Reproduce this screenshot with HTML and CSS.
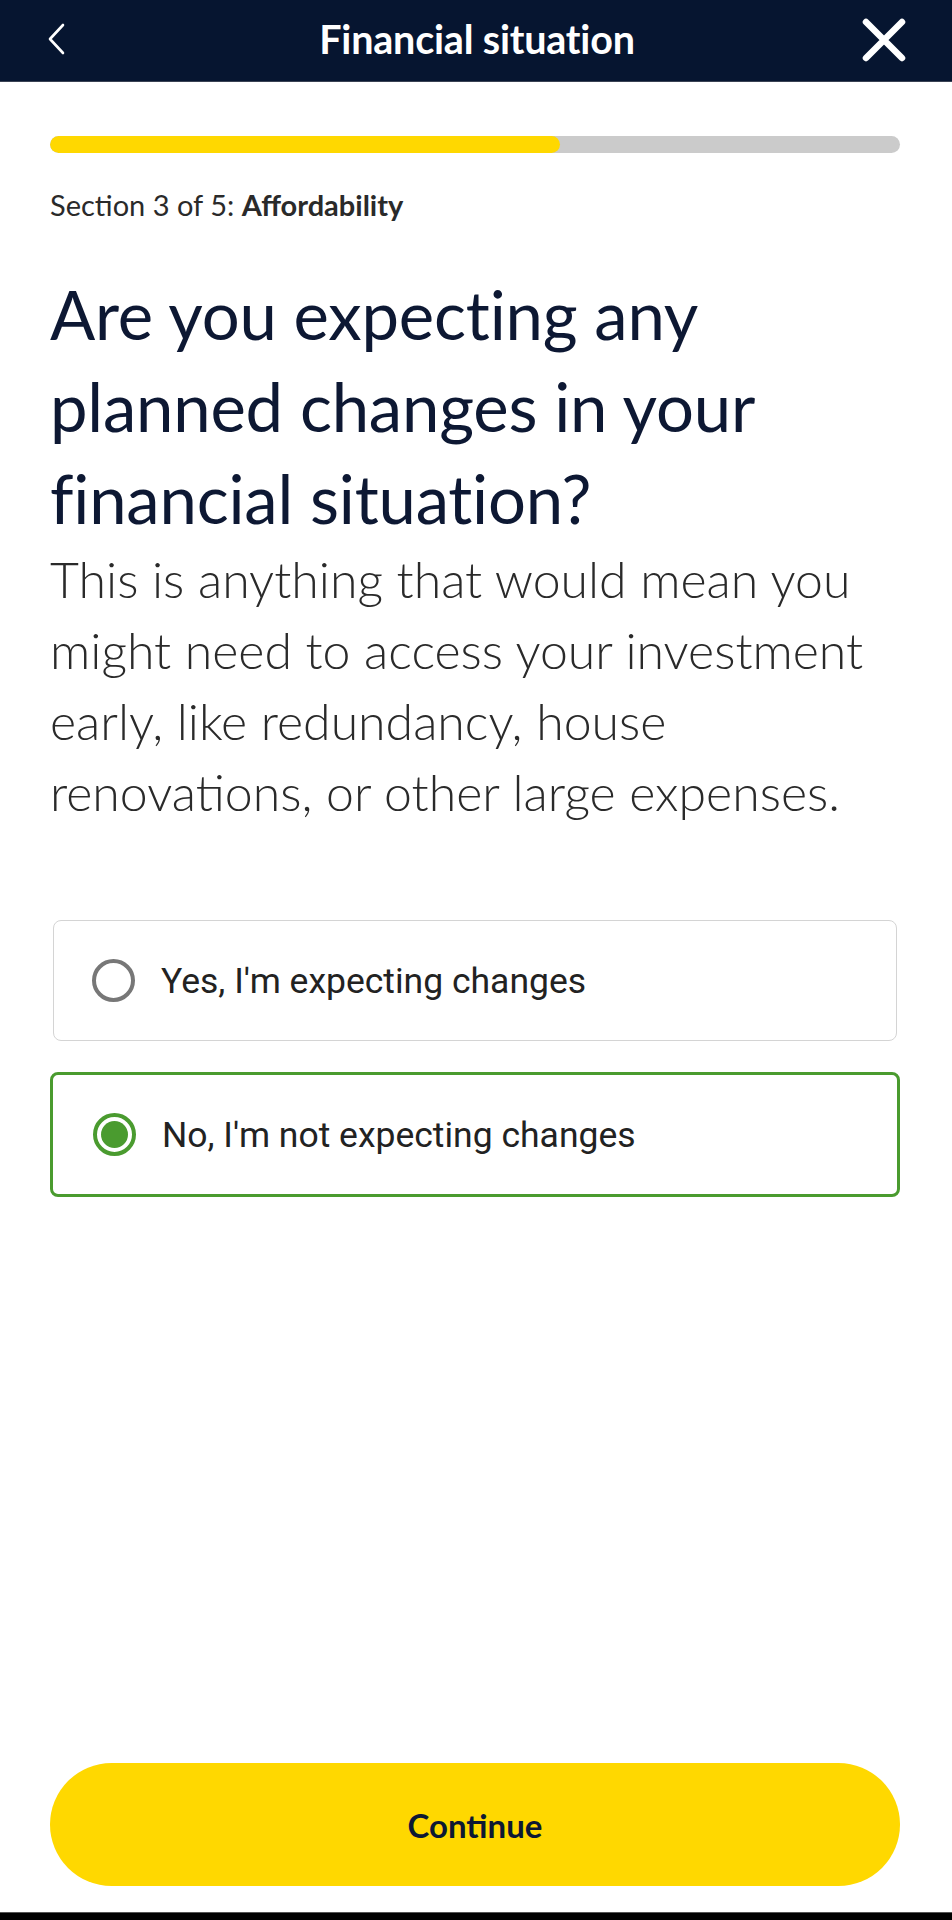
FILE: index.html
```html
<!DOCTYPE html>
<html lang="en">
<head>
<meta charset="utf-8">
<title>Financial situation</title>
<link rel="stylesheet" href="styles.css">
</head>
<body>
<div class="screen">
  <header class="topbar">
    <button class="icon-btn back" aria-label="Back">
      <svg width="20" height="32" viewBox="0 0 20 32"><path d="M15 2 L2 16 L15 30" fill="none" stroke="#fff" stroke-width="2.6" stroke-linecap="round" stroke-linejoin="round"/></svg>
    </button>
    <h1 class="title">Financial situation</h1>
    <button class="icon-btn close" aria-label="Close">
      <svg width="44" height="44" viewBox="0 0 44 44"><path d="M4 4 L40 40 M40 4 L4 40" fill="none" stroke="#fff" stroke-width="6.5" stroke-linecap="round"/></svg>
    </button>
  </header>
  <main class="content">
    <div class="progress"><div class="progress-fill" style="width:60%"></div></div>
    <p class="section">Section 3 of 5: <strong>Affordability</strong></p>
    <h2 class="question">Are you expecting any planned changes in your financial situation?</h2>
    <p class="hint">This is anything that would mean you might need to access your investment early, like redundancy, house renovations, or other large expenses.</p>
    <div class="options">
      <label class="option">
        <span class="radio"></span>
        <span class="option-text">Yes, I'm expecting changes</span>
      </label>
      <label class="option selected">
        <span class="radio"></span>
        <span class="option-text">No, I'm not expecting changes</span>
      </label>
    </div>
  </main>
  <footer class="footer">
    <button class="continue">Continue</button>
  </footer>
  <div class="navbar"></div>
</div>
</body>
</html>
```

FILE: styles.css
```css
html, body {
  margin: 0;
  padding: 0;
  background: #fff;
}
.screen {
  width: 952px;
  height: 1920px;
  display: flex;
  flex-direction: column;
  font-family: "Lato", "Open Sans", sans-serif;
}
.topbar {
  height: 82px;
  background: #061530;
  display: grid;
  grid-template-columns: 1fr auto 1fr;
  align-items: center;
  padding: 0 46px 0 48px;
  box-sizing: border-box;
  border-bottom: 1px solid #3a4254;
}
.icon-btn {
  background: none;
  border: 0;
  padding: 0;
  display: flex;
  align-items: center;
  justify-content: center;
}
.back { width: 20px; height: 32px; margin-top: -4px; justify-self: start; }
.close { width: 44px; height: 44px; margin-top: -2px; justify-self: end; }
.title {
  margin: 0;
  color: #fff;
  font-size: 39.5px;
  font-weight: 700;
  letter-spacing: -0.2px;
  margin-top: -4px;
}
.content {
  padding: 0 52px 0 50px;
  display: flex;
  flex-direction: column;
  flex: 1;
}
.progress {
  margin-top: 54px;
  height: 17px;
  border-radius: 9px;
  background: #cbcbcb;
  overflow: hidden;
}
.progress-fill {
  height: 100%;
  background: #ffd800;
  border-radius: 9px;
}
.section {
  margin: 35px 0 0;
  font-size: 29px;
  line-height: 34px;
  color: #2a2a2a;
}
.section strong { font-weight: 700; }
.question {
  margin: 46px 0 0;
  font-size: 67px;
  line-height: 92px;
  font-weight: 400;
  color: #0d1833;
  letter-spacing: -0.2px;
}
.hint {
  margin: 0;
  font-size: 50px;
  line-height: 71px;
  font-weight: 300;
  color: #2a2a2a;
}
.options {
  margin-top: 92px;
  display: flex;
  flex-direction: column;
  gap: 31px;
}
.option {
  display: flex;
  align-items: center;
  gap: 26px;
  height: 121px;
  margin: 0 3px;
  padding: 0 38px;
  box-sizing: border-box;
  border: 1.5px solid #d4d4d4;
  border-radius: 8px;
}
.option.selected {
  height: 125px;
  margin: 0;
  padding: 0 38px 0 40px;
  border: 3px solid #4a9b2f;
}
.radio {
  width: 43px;
  height: 43px;
  box-sizing: border-box;
  border: 4px solid #777;
  border-radius: 50%;
  flex: none;
  position: relative;
}
.selected .radio {
  border-color: #4a9b2f;
}
.selected .radio::after {
  content: "";
  position: absolute;
  left: 4px;
  top: 4px;
  width: 27px;
  height: 27px;
  border-radius: 50%;
  background: #4a9b2f;
}
.option-text {
  font-family: "Roboto", sans-serif;
  font-size: 35.5px;
  color: #222;
}
.footer {
  padding: 0 52px 26px 50px;
}
.continue {
  width: 100%;
  height: 123px;
  border: 0;
  border-radius: 62px;
  background: #ffd800;
  color: #0d1833;
  font-family: "Lato", sans-serif;
  font-size: 33px;
  font-weight: 700;
}
.navbar {
  height: 7px;
  background: #000;
  border-top: 1px solid #555;
}
```
